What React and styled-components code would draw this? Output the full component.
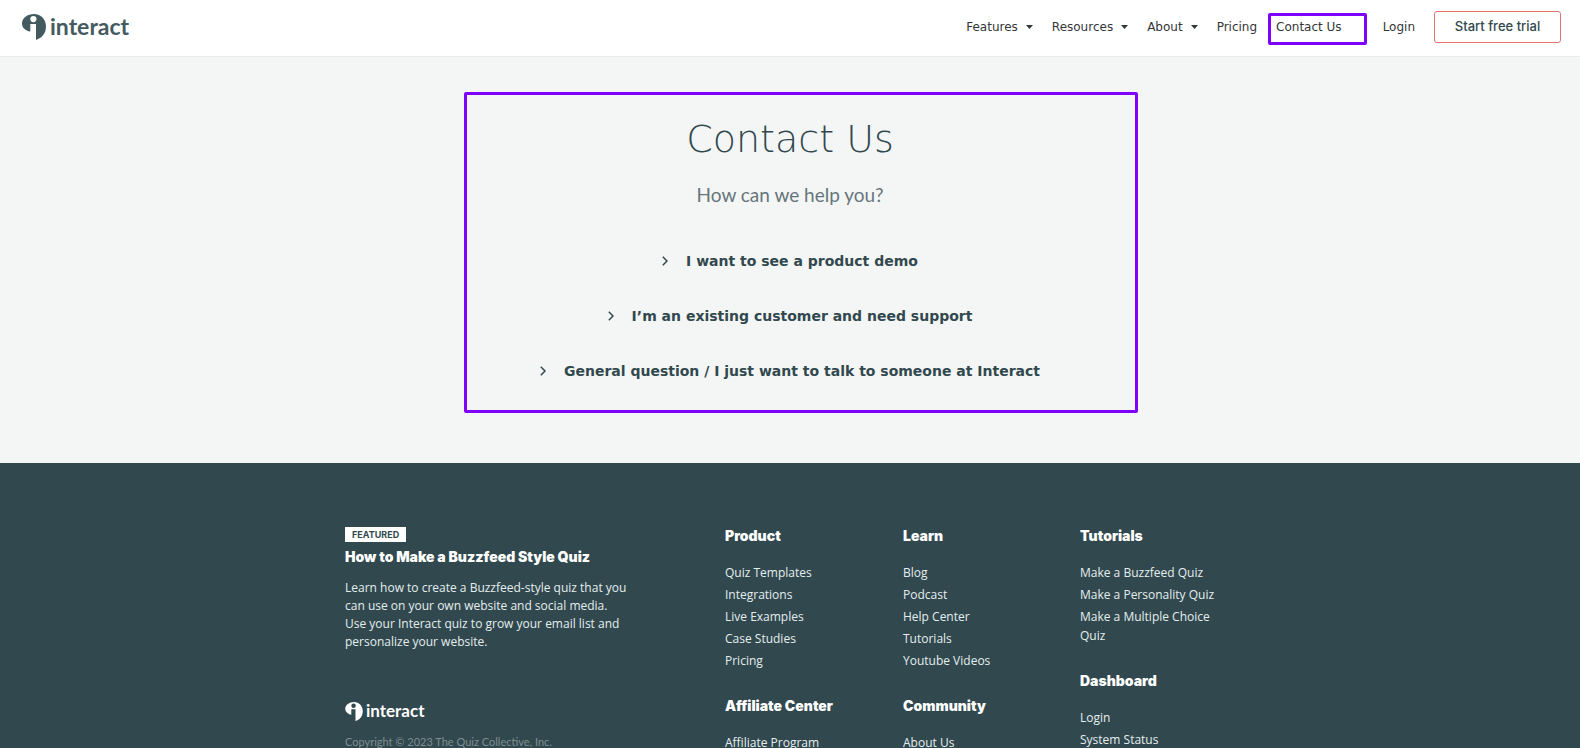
import React, { useState } from 'react';
import styled, { createGlobalStyle, ThemeProvider } from 'styled-components';

const theme = {
  ink: '#31484e',
  text: '#333638',
  page: '#f4f6f5',
  link: '#e4eeee',
  muted: '#7d8d90',
  outline: '#e57373',
  highlight: '#7f00ff',
  wide: '"DejaVu Sans", Verdana, sans-serif',
  heavy: 'Inter, "Arial Black", sans-serif',
  body: '"Open Sans", "Noto Sans", sans-serif',
  soft: 'Lato, "Helvetica Neue", sans-serif',
};

const GlobalStyle = createGlobalStyle`
  *, *::before, *::after { box-sizing: border-box; }
  body {
    margin: 0;
    background: ${theme.page};
    color: ${theme.ink};
    font-family: ${theme.body};
  }
  h1, h2, h3, p, ul { margin: 0; padding: 0; }
  ul { list-style: none; }
  a { color: inherit; text-decoration: none; }
  button { font: inherit; color: inherit; cursor: pointer; }
`;

const Header = styled.header`
  display: flex;
  align-items: center;
  justify-content: space-between;
  padding: 11px 19px 13px 22px;
  background: #fff;
  border-bottom: 1px solid #ebeded;
`;

const Brand = styled.a`
  display: inline-flex;
  align-items: flex-start;
  gap: ${({ $small }) => ($small ? 3 : 4)}px;
  color: ${({ $small }) => ($small ? '#fff' : '#435b5f')};
  font-family: ${({ theme }) => theme.soft};
  font-size: ${({ $small }) => ($small ? 17 : 23)}px;
  line-height: ${({ $small }) => ($small ? 17 : 24)}px;
  font-weight: 700;

  svg {
    width: ${({ $small }) => ($small ? 18 : 24)}px;
    height: ${({ $small }) => ($small ? 19 : 26)}px;
  }
`;

const Nav = styled.nav`
  display: flex;
  align-items: center;
  gap: 19px;
  color: ${({ theme }) => theme.text};
  font-family: ${({ theme }) => theme.wide};
  font-size: 12px;
  line-height: 16px;
`;

const MenuButton = styled.button`
  display: flex;
  align-items: center;
  gap: 8px;
  padding: 0;
  border: 0;
  background: none;
`;

const NavLink = styled.a`
  position: relative;
  padding-right: ${({ $marked }) => ($marked ? 22 : 0)}px;
`;

const TrialLink = styled.a`
  width: 127px;
  height: 32px;
  border: 1px solid ${({ theme }) => theme.outline};
  border-radius: 3px;
  color: ${({ theme }) => theme.ink};
  font-family: ${({ theme }) => theme.heavy};
  font-size: 13px;
  font-weight: 500;
  line-height: 28px;
  text-align: center;
`;

const Highlight = styled.span`
  position: absolute;
  inset: ${({ $inset }) => $inset};
  border: 3px solid ${({ theme }) => theme.highlight};
  border-radius: 2px;
  pointer-events: none;
`;

const Main = styled.main`
  padding: 35px 16px 50px;
`;

const Panel = styled.section`
  position: relative;
  display: flex;
  flex-direction: column;
  align-items: center;
  max-width: 674px;
  margin: 0 auto;
  padding: 23px 0 30px;
`;

const Title = styled.h1`
  font-family: ${({ theme }) => theme.wide};
  font-size: 38px;
  font-weight: 300;
  line-height: 48px;
`;

const Subtitle = styled.p`
  margin: 18px 0 40px;
  color: #66757b;
  font-family: ${({ theme }) => theme.soft};
  font-size: 19px;
  line-height: 28px;
`;

const TopicList = styled.ul`
  display: flex;
  flex-direction: column;
  align-items: center;
  gap: 31px;
`;

const TopicButton = styled.button`
  display: flex;
  align-items: center;
  gap: 18px;
  padding: 0;
  border: 0;
  background: none;
  font-family: ${({ theme }) => theme.wide};
  font-size: 14px;
  font-weight: 700;
  line-height: 24px;
`;

const Footer = styled.footer`
  padding: 64px 16px 40px;
  background: ${({ theme }) => theme.ink};
  color: ${({ theme }) => theme.link};
  font-size: 12px;
  line-height: 18px;
`;

const FooterGrid = styled.div`
  display: grid;
  grid-template-columns: 380fr 178fr 177fr 155fr;
  max-width: 890px;
  margin: 0 auto;
`;

const Featured = styled.div`
  display: flex;
  flex-direction: column;
  align-items: flex-start;
`;

const Badge = styled.span`
  padding: 0 7px;
  background: #fff;
  color: ${({ theme }) => theme.ink};
  font-family: ${({ theme }) => theme.heavy};
  font-size: 9px;
  font-weight: 700;
  line-height: 15px;
`;

const FooterHeading = styled.h3`
  color: #fff;
  font-family: ${({ theme }) => theme.heavy};
  font-size: 14px;
  font-weight: 900;
  line-height: 18px;
`;

const FeaturedTitle = styled(FooterHeading)`
  margin: 6px 0 13px;
`;

const Summary = styled.p`
  max-width: 284px;
  margin-bottom: 51px;
`;

const Copyright = styled.p`
  margin-top: 12px;
  color: ${({ theme }) => theme.muted};
  font-family: ${({ theme }) => theme.soft};
  font-size: 11px;
`;

const FooterColumn = styled.div`
  display: flex;
  flex-direction: column;
  gap: 27px;
`;

const LinkList = styled.ul`
  display: flex;
  flex-direction: column;
  gap: 3px;
  margin-top: 18px;
  line-height: 19px;
`;

const LogoMark = () => (
  <svg viewBox="0 0 24 26" fill="currentColor" aria-hidden="true">
    <path
      fillRule="evenodd"
      d="M12 0C18.7 0 24 5.2 24 12.6C24 19.2 19.9 24.3 14 26V10H8.3V17.6C3.4 16.6 0 13.6 0 9.4C0 4 5.4 0 12 0ZM11.4 2A3.1 3.1 0 1 0 11.4 8.2A3.1 3.1 0 1 0 11.4 2Z"
    />
  </svg>
);

const Caret = () => (
  <svg width="7" height="4" viewBox="0 0 7 4" fill="currentColor" aria-hidden="true">
    <path d="M0 0H7L3.5 4Z" />
  </svg>
);

const Chevron = () => (
  <svg width="6" height="10" viewBox="0 0 6 10" fill="none" stroke="currentColor" strokeWidth="1.5" aria-hidden="true">
    <path d="M0.8 0.8L5 5L0.8 9.2" />
  </svg>
);

const MENUS = ['Features', 'Resources', 'About'];

const TOPICS = [
  'I want to see a product demo',
  'I’m an existing customer and need support',
  'General question / I just want to talk to someone at Interact',
];

const COLUMNS = [
  [
    ['Product', ['Quiz Templates', 'Integrations', 'Live Examples', 'Case Studies', 'Pricing']],
    ['Affiliate Center', ['Affiliate Program']],
  ],
  [
    ['Learn', ['Blog', 'Podcast', 'Help Center', 'Tutorials', 'Youtube Videos']],
    ['Community', ['About Us']],
  ],
  [
    ['Tutorials', ['Make a Buzzfeed Quiz', 'Make a Personality Quiz', 'Make a Multiple Choice Quiz']],
    ['Dashboard', ['Login', 'System Status']],
  ],
];

export default function App() {
  const [open, setOpen] = useState(null);

  return (
    <ThemeProvider theme={theme}>
      <GlobalStyle />
      <Header>
        <Brand href="#">
          <LogoMark />
          interact
        </Brand>
        <Nav aria-label="Main">
          {MENUS.map((name) => (
            <MenuButton key={name} type="button" aria-haspopup="true">
              {name}
              <Caret />
            </MenuButton>
          ))}
          <NavLink href="#pricing">Pricing</NavLink>
          <NavLink href="#contact" $marked>
            Contact Us
            <Highlight $inset="-6px -3px -10px -8px" />
          </NavLink>
          <NavLink href="#login">Login</NavLink>
          <TrialLink href="#trial">Start free trial</TrialLink>
        </Nav>
      </Header>

      <Main>
        <Panel id="contact">
          <Title>Contact Us</Title>
          <Subtitle>How can we help you?</Subtitle>
          <TopicList>
            {TOPICS.map((topic) => (
              <li key={topic}>
                <TopicButton
                  type="button"
                  aria-expanded={open === topic}
                  onClick={() => setOpen(open === topic ? null : topic)}
                >
                  <Chevron />
                  {topic}
                </TopicButton>
              </li>
            ))}
          </TopicList>
          <Highlight $inset="0 -11px 0 11px" />
        </Panel>
      </Main>

      <Footer>
        <FooterGrid>
          <Featured>
            <Badge>FEATURED</Badge>
            <FeaturedTitle>How to Make a Buzzfeed Style Quiz</FeaturedTitle>
            <Summary>
              Learn how to create a Buzzfeed-style quiz that you can use on your own website and
              social media. Use your Interact quiz to grow your email list and personalize your
              website.
            </Summary>
            <Brand href="#" $small>
              <LogoMark />
              interact
            </Brand>
            <Copyright>Copyright © 2023 The Quiz Collective, Inc.</Copyright>
          </Featured>
          {COLUMNS.map((groups, index) => (
            <FooterColumn key={index}>
              {groups.map(([heading, links]) => (
                <section key={heading}>
                  <FooterHeading>{heading}</FooterHeading>
                  <LinkList>
                    {links.map((link) => (
                      <li key={link}>
                        <a href="#">{link}</a>
                      </li>
                    ))}
                  </LinkList>
                </section>
              ))}
            </FooterColumn>
          ))}
        </FooterGrid>
      </Footer>
    </ThemeProvider>
  );
}
